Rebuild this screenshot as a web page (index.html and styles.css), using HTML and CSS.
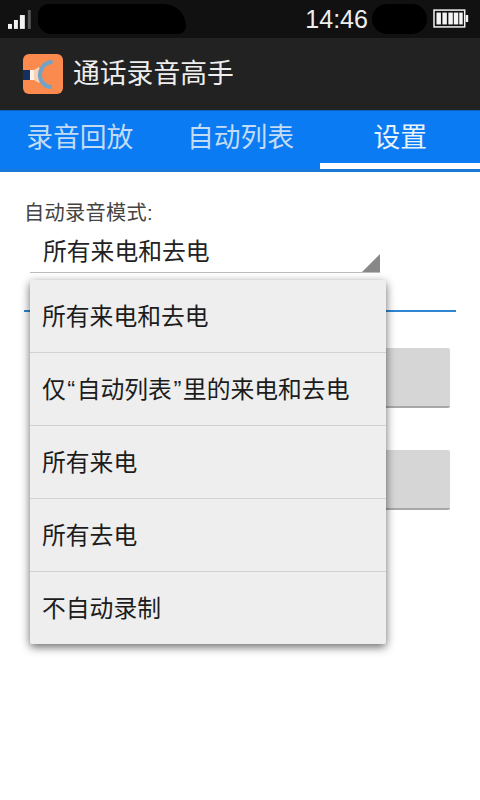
FILE: index.html
```html
<!DOCTYPE html>
<html lang="zh-CN">
<head>
  <meta charset="UTF-8" />
  <title>通话录音高手</title>
  <link rel="stylesheet" href="styles.css">
</head>
<body>
  <div class="status-bar">
    <svg class="signal" width="24" height="20" viewBox="0 0 24 20">
      <rect x="0" y="15" width="4" height="5" fill="#f2f2f2"/>
      <rect x="6" y="11" width="4" height="9" fill="#f2f2f2"/>
      <rect x="12" y="6" width="5" height="14" fill="#f2f2f2"/>
      <rect x="20" y="1" width="3" height="19" fill="#555"/>
    </svg>
    <div class="scrawl scrawl-left"></div>
    <span class="clock">14:46</span>
    <div class="scrawl scrawl-right"></div>
    <svg class="battery" width="36" height="20" viewBox="0 0 36 20">
      <rect x="1" y="1" width="31" height="17" fill="none" stroke="#f4f4f4" stroke-width="1.5"/>
      <rect x="33" y="6" width="2.5" height="7" fill="#f4f4f4"/>
      <rect x="3.5" y="3.5" width="4.5" height="12" fill="#f4f4f4"/>
      <rect x="9.5" y="3.5" width="4.5" height="12" fill="#f4f4f4"/>
      <rect x="15.5" y="3.5" width="4.5" height="12" fill="#f4f4f4"/>
      <rect x="21" y="3.5" width="4.5" height="12" fill="#f4f4f4"/>
      <rect x="26.5" y="3.5" width="3.5" height="12" fill="#f4f4f4"/>
    </svg>
  </div>

  <div class="app-bar">
    <svg class="app-icon" width="40" height="40" viewBox="0 0 40 40">
      <rect width="40" height="40" rx="6" fill="#fb8a4e"/>
      <path d="M0 16h7v10H0z" fill="#14305f"/>
      <path d="M7 16h4v10H7z" fill="#fdf0e6"/>
      <path d="M11 16l5-3 3 4v8l-3 4-5-3z" fill="#f8d2b6"/>
      <path d="M28 8c-7 1-11 7-11 13s4 11 10 12" fill="none" stroke="#6fa3c8" stroke-width="4" stroke-linecap="round"/>
    </svg>
    <span class="app-title">通话录音高手</span>
  </div>

  <div class="tabs">
    <div class="tab">录音回放</div>
    <div class="tab">自动列表</div>
    <div class="tab tab-active">设置</div>
  </div>

  <div class="content">
    <div class="field-label">自动录音模式:</div>
    <div class="spinner">所有来电和去电</div>
    <div class="divider"></div>
    <div class="gray-btn gray-btn-first"></div>
    <div class="gray-btn gray-btn-second"></div>

    <div class="menu">
      <div class="menu-item">所有来电和去电</div>
      <div class="menu-item">仅<span class="quote">“</span>自动列表<span class="quote">”</span>里的来电和去电</div>
      <div class="menu-item">所有来电</div>
      <div class="menu-item">所有去电</div>
      <div class="menu-item">不自动录制</div>
    </div>
  </div>
</body>
</html>
```

FILE: styles.css
```css
body {
  margin: 0;
  width: 480px;
  height: 800px;
  overflow: hidden;
  background: #fff;
  font-family: "Liberation Sans", "Noto Sans CJK SC", sans-serif;
}

.status-bar {
  height: 38px;
  background: #111;
  display: flex;
  align-items: center;
  padding: 0 11px 0 8px;
  box-sizing: border-box;
}
.scrawl {
  background: #000;
  height: 30px;
}
.scrawl-left {
  width: 150px;
  margin-left: 6px;
  border-radius: 20px 40px 14px 24px;
}
.scrawl-right {
  width: 56px;
  margin-left: 4px;
  border-radius: 16px;
}
.clock {
  margin-left: 119px;
  font-size: 25px;
  color: #eee;
}
.battery {
  margin-left: 6px;
}

.app-bar {
  height: 72px;
  background: #222;
  display: flex;
  align-items: center;
  padding-left: 23px;
  box-sizing: border-box;
}
.app-title {
  margin-left: 10px;
  font-size: 26.8px;
  line-height: 36px;
  color: #eee;
}

.tabs {
  height: 62px;
  background: #0a7bf2;
  display: flex;
  box-sizing: border-box;
  border-top: 1px solid #0d62bd;
  border-bottom: 3px solid #1a78d8;
}
.tab {
  flex: 1;
  text-align: center;
  font-size: 26.8px;
  line-height: 54px;
  color: #c3dcf6;
}
.tab:first-child {
  padding-right: 1px;
}
.tab-active {
  color: #e8f2fc;
  box-shadow: inset 0 -6px 0 #fff;
}

.content {
  position: relative;
  height: 628px;
  padding: 28px 24px 0;
  box-sizing: border-box;
}
.field-label {
  font-size: 20.2px;
  letter-spacing: 0.3px;
  line-height: 26px;
  margin-bottom: -2px;
  color: #444;
}
.spinner {
  position: relative;
  margin: 3px 76px 0 6px;
  height: 46px;
  padding-left: 13px;
  box-sizing: border-box;
  border-bottom: 1px solid #bbb;
  font-size: 23.8px;
  line-height: 50px;
  color: #222;
}
.spinner::after {
  content: "";
  position: absolute;
  right: 0;
  bottom: 0;
  border-left: 18px solid transparent;
  border-bottom: 18px solid #888;
}
.divider {
  margin-top: 37px;
  height: 2px;
  background: #2f86d2;
}
.gray-btn {
  height: 60px;
  margin: 0 6px;
  background: #d6d6d6;
  box-sizing: border-box;
  border-radius: 2px;
  border-bottom: 2px solid #a8a8a8;
}
.gray-btn-first {
  margin-top: 36px;
}
.gray-btn-second {
  margin-top: 42px;
}

.menu {
  position: absolute;
  left: 30px;
  top: 108px;
  width: 356px;
  background: #eee;
  border-radius: 2px;
  box-shadow: 0 3px 10px rgba(0, 0, 0, 0.6);
}
.menu-item {
  height: 73px;
  padding-left: 12px;
  box-sizing: border-box;
  border-top: 1px solid #d2d2d2;
  font-size: 23.8px;
  line-height: 73px;
  color: #1c1c1c;
}
.menu-item:first-child {
  height: 72px;
  border-top: none;
}
.quote {
  padding: 0 1.5px;
}
```
